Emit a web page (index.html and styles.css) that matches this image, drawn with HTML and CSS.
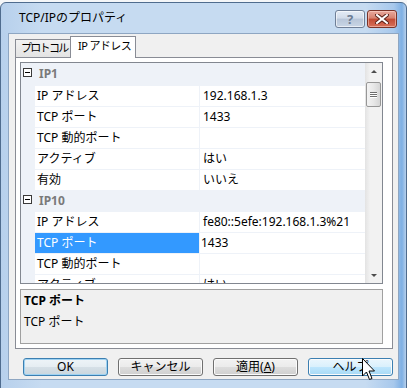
FILE: index.html
```html
<!DOCTYPE html>
<html lang="ja">
  <head>
    <meta charset="UTF-8" />
    <title>TCP/IPのプロパティ</title>
    <link rel="stylesheet" href="styles.css">
  </head>
  <body>
    <div id="window">
      <div id="titlebar">
        <span id="title">TCP/IPのプロパティ</span>
        <div id="caption-buttons">
          <div class="cap-btn help">?</div>
          <div class="cap-btn close">
            <svg width="14" height="10" viewBox="0 0 14 10">
              <path d="M2 1 L12 9 M12 1 L2 9" stroke="#5a2018" stroke-width="4" stroke-linecap="square" />
              <path d="M2 1 L12 9 M12 1 L2 9" stroke="#ffffff" stroke-width="2" stroke-linecap="square" />
            </svg>
          </div>
        </div>
      </div>

      <div id="client">
        <div id="tabs">
          <div class="tab">プロトコル</div>
          <div class="tab active">IP アドレス</div>
        </div>

        <div id="tabpage">
          <div id="grid">
            <div id="rows">
              <div class="row cat first">
                <span class="margin"><span class="toggle"></span></span>
                <span class="cat-name">IP1</span>
              </div>
              <div class="row">
                <span class="margin"></span>
                <span class="name">IP アドレス</span>
                <span class="value">192.168.1.3</span>
              </div>
              <div class="row">
                <span class="margin"></span>
                <span class="name">TCP ポート</span>
                <span class="value">1433</span>
              </div>
              <div class="row">
                <span class="margin"></span>
                <span class="name">TCP 動的ポート</span>
                <span class="value"></span>
              </div>
              <div class="row">
                <span class="margin"></span>
                <span class="name">アクティブ</span>
                <span class="value">はい</span>
              </div>
              <div class="row">
                <span class="margin"></span>
                <span class="name">有効</span>
                <span class="value">いいえ</span>
              </div>
              <div class="row cat">
                <span class="margin"><span class="toggle"></span></span>
                <span class="cat-name">IP10</span>
              </div>
              <div class="row">
                <span class="margin"></span>
                <span class="name">IP アドレス</span>
                <span class="value">fe80::5efe:192.168.1.3%21</span>
              </div>
              <div class="row selected">
                <span class="margin"></span>
                <span class="name">TCP ポート</span>
                <span class="value">1433</span>
              </div>
              <div class="row">
                <span class="margin"></span>
                <span class="name">TCP 動的ポート</span>
                <span class="value"></span>
              </div>
              <div class="row">
                <span class="margin"></span>
                <span class="name">アクティブ</span>
                <span class="value">はい</span>
              </div>
            </div>
            <div id="scrollbar">
              <div class="sb-arrow up"></div>
              <div class="sb-thumb">
                <span></span><span></span><span></span>
              </div>
              <div class="sb-track"></div>
              <div class="sb-arrow down"></div>
            </div>
          </div>

          <div id="desc">
            <div class="desc-title">TCP ポート</div>
            <div class="desc-text">TCP ポート</div>
          </div>
        </div>

        <div id="buttons">
          <div class="btn default">OK</div>
          <div class="btn">キャンセル</div>
          <div class="btn">適用(<u>A</u>)</div>
          <div class="btn hover">ヘルプ</div>
        </div>
      </div>
    </div>

    <!-- mouse pointer over the help button -->
    <svg id="cursor" width="14" height="23" viewBox="0 0 14 23">
      <path d="M0.5 0.5 L0.5 18 L4.5 14 L7.5 21.5 L10 20.5 L7 13 L12.5 13 Z" fill="#ffffff" stroke="#000000" stroke-width="1" />
    </svg>
  </body>
</html>
```

FILE: styles.css
```css
* {
  margin: 0;
  padding: 0;
  box-sizing: border-box;
}

body {
  width: 407px;
  height: 388px;
  overflow: hidden;
  background-color: #f4f6f8;
  font-family: "Noto Sans", "Noto Sans CJK JP", sans-serif;
  font-size: 12px;
  color: #000;
  position: relative;
}

#window {
  margin-top: 2px;
  width: 407px;
  height: 392px;
  border: 1px solid #4f6c8e;
  border-radius: 6px 6px 0 0;
  background: linear-gradient(to right, #b7d0ec 0%, #c6dbf1 10%, #c6dbf1 90%, #a7c8ec 97%, #7fb0e4 99%, #b7d0ec 100%);
  padding: 0 7px;
}

#titlebar {
  height: 30px;
  display: flex;
  align-items: flex-start;
  justify-content: space-between;
}

#title {
  margin-left: 11px;
  margin-top: 7px;
  font-size: 12px;
  line-height: 16px;
}

#caption-buttons {
  display: flex;
  gap: 2px;
  margin-top: 7px;
  margin-right: 2px;
}

.cap-btn {
  width: 30px;
  height: 18px;
  border-radius: 3px;
  display: flex;
  align-items: center;
  justify-content: center;
}

.cap-btn.help {
  border: 1px solid #6f7f97;
  background: linear-gradient(#e4ecf6 0%, #d2dcea 45%, #b8c6d9 50%, #c9d6e6 100%);
  color: #6c7c93;
  font-size: 13px;
  font-weight: bold;
  line-height: 16px;
  box-shadow: inset 0 0 0 1px rgba(255, 255, 255, 0.6);
}

.cap-btn.close {
  border: 1px solid #7a3328;
  background: linear-gradient(#e9a99d 0%, #d6816f 45%, #c24a33 50%, #d7705a 100%);
  box-shadow: inset 0 0 0 1px rgba(255, 220, 210, 0.5);
}

#client {
  height: 347px;
  background-color: #f0f0f0;
  border: 1px solid #8ea6c2;
  padding-top: 2px;
}

#tabs {
  display: flex;
  align-items: flex-end;
  height: 21px;
  margin-left: 6px;
  position: relative;
  z-index: 1;
}

.tab {
  height: 18px;
  width: 56px;
  padding-left: 5px;
  border: 1px solid #898c95;
  border-bottom: none;
  background: linear-gradient(#f2f2f2, #e3e3e3);
  line-height: 16px;
  white-space: nowrap;
  font-size: 11px;
  letter-spacing: -1.7px;
}

.tab.active {
  width: 66px;
  height: 22px;
  margin-left: -1px;
  margin-bottom: -1px;
  background: #ffffff;
  padding-left: 7px;
  line-height: 18px;
  letter-spacing: -0.6px;
}

#tabpage {
  margin-left: 6px;
  width: 378px;
  height: 292px;
  border: 1px solid #898c95;
  background-color: #ffffff;
  padding: 4px 0 0 4px;
}

#grid {
  width: 363px;
  height: 222px;
  border: 1px solid #828790;
  display: flex;
}

#rows {
  flex: 1;
  overflow: hidden;
}

.row {
  height: 21px;
  display: flex;
  border-bottom: 1px solid #eef2f8;
  line-height: 20px;
}

.row.first {
  height: 23px;
}

.margin {
  width: 14px;
  background-color: #eef2f8;
  flex-shrink: 0;
  position: relative;
}

.name {
  width: 165px;
  padding-left: 2px;
  border-right: 1px solid #eef2f8;
  white-space: nowrap;
}

.value {
  flex: 1;
  padding-left: 3px;
  white-space: nowrap;
}

.row.cat {
  background-color: #eef2f8;
  align-items: center;
}

.toggle {
  position: absolute;
  left: 2px;
  top: 4px;
  width: 9px;
  height: 9px;
  border: 1px solid #3a3a3a;
  background-color: #ffffff;
}

.row.first .toggle {
  top: 5px;
}

.toggle::after {
  content: "";
  position: absolute;
  left: 1px;
  top: 3px;
  width: 5px;
  height: 1px;
  background-color: #000;
}

.cat-name {
  padding-left: 4px;
  font-weight: bold;
  color: #7a7a7a;
}

.row.cat .margin {
  align-self: stretch;
}

.row.selected .name {
  background-color: #3399ff;
  color: #ffffff;
}

.row.selected .value {
  padding-left: 1px;
}

#scrollbar {
  width: 17px;
  display: flex;
  flex-direction: column;
  background: linear-gradient(to right, #e3e3e3, #f2f2f2 30%, #f2f2f2);
}

.sb-arrow {
  height: 17px;
  position: relative;
}

.sb-arrow::after {
  content: "";
  position: absolute;
  left: 6px;
  border-left: 3px solid transparent;
  border-right: 3px solid transparent;
}

.sb-arrow.up::after {
  top: 7px;
  border-bottom: 3px solid #4d4d4d;
}

.sb-arrow.down::after {
  top: 8px;
  border-top: 3px solid #4d4d4d;
}

.sb-thumb {
  margin: 2px 1px 0 1px;
  height: 25px;
  border: 1px solid #979797;
  border-radius: 2px;
  background: linear-gradient(to right, #f3f3f3, #e8e8e8 50%, #d6d6d6);
  display: flex;
  flex-direction: column;
  align-items: center;
  justify-content: center;
  gap: 1px;
}

.sb-thumb span {
  width: 7px;
  height: 1px;
  background-color: #6e6e6e;
  box-shadow: 0 1px 0 #ffffff;
}

.sb-track {
  flex: 1;
}

#desc {
  margin-top: 5px;
  width: 363px;
  height: 55px;
  border: 1px solid #a0a0a0;
  background-color: #f0f0f0;
  padding: 1px 0 0 3px;
  line-height: 20px;
}

.desc-title {
  font-weight: bold;
}

.desc-text {
  margin-top: 1px;
}

#buttons {
  display: flex;
  gap: 10px;
  margin-top: 9px;
  margin-left: 14px;
}

.btn {
  width: 85px;
  height: 18px;
  border: 1px solid #707070;
  border-radius: 3px;
  background: linear-gradient(#f2f2f2 0%, #ebebeb 50%, #dddddd 50%, #cfcfcf 100%);
  box-shadow: inset 0 0 0 1px #fbfbfb;
  text-align: center;
  line-height: 16px;
}

.btn.default {
  border-color: #3c7fb1;
  box-shadow: inset 0 0 0 1px #9ed2f2;
  background: linear-gradient(#eef4f8 0%, #e5edf2 50%, #d6e0e7 50%, #cad6de 100%);
}

.btn.hover {
  border-color: #3c7fb1;
  background: linear-gradient(#eaf6fd 0%, #d9f0fc 50%, #bee6fd 50%, #a7d9f5 100%);
}

#cursor {
  position: absolute;
  left: 362px;
  top: 358px;
}
```
